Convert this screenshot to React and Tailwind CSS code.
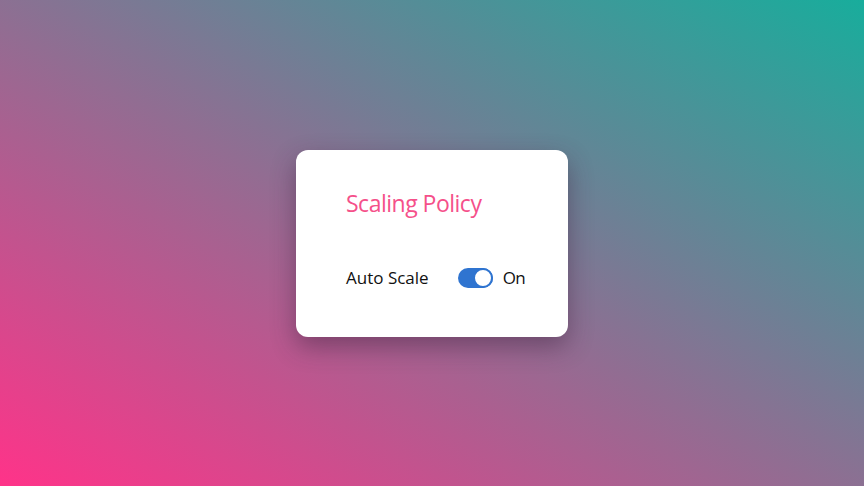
import React, { useState } from 'react';

export default function App() {
  const [on, setOn] = useState(true);

  return (
    <div className="w-[864px] h-[486px] flex items-center justify-center bg-[linear-gradient(to_top_right,#ff3389,#18ad9c)] font-['Open_Sans',sans-serif]">
      <div className="w-[272px] h-[187px] bg-white rounded-[12px] shadow-[0_10px_24px_rgba(60,30,60,0.45)] pl-[50px] pt-[38px] flex flex-col">
        <h2 className="text-[23px] leading-[30px] text-[#f5508a] tracking-[-0.5px]">Scaling Policy</h2>

        <div className="flex items-center mt-[49px] h-[22px]">
          <span className="text-[17px] text-[#111]">Auto Scale</span>
          <button
            onClick={() => setOn(!on)}
            className="ml-[29px] w-[35px] h-[20px] rounded-full bg-[#2f74d0] relative"
          >
            <span className="absolute right-0 top-0 w-[20px] h-[20px] rounded-full bg-white border-2 border-[#2f74d0]" />
          </button>
          <span className="ml-[10px] text-[17px] text-[#111] tracking-[-0.5px]">{on ? 'On' : 'Off'}</span>
        </div>
      </div>
    </div>
  );
}
